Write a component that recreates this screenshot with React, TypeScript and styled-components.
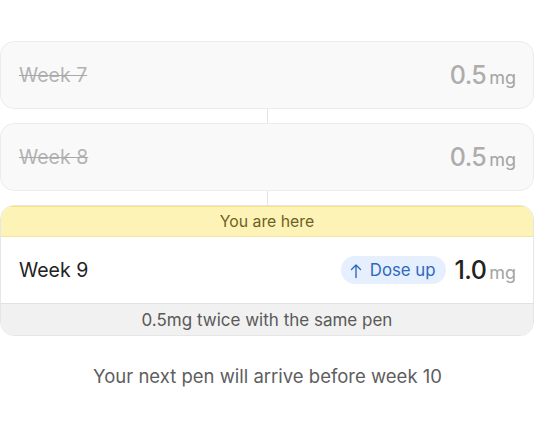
import React, { FC } from 'react';
import styled, { createGlobalStyle, css } from 'styled-components';

const GlobalStyle = createGlobalStyle`
  html, body {
    margin: 0;
    padding: 0;
    background: #ffffff;
  }
  body {
    font-family: Inter, 'Noto Sans', sans-serif;
    -webkit-font-smoothing: antialiased;
  }
`;

interface WeekItem {
  week: number;
  dose: string;
  done?: boolean;
}

const pastWeeks: WeekItem[] = [
  { week: 7, dose: '0.5', done: true },
  { week: 8, dose: '0.5', done: true },
];

const DoseValue: FC<{ dose: string; muted?: boolean }> = ({ dose, muted }) => (
  <Dose $muted={muted}>
    <DoseNumber>{dose}</DoseNumber>
    <DoseUnit>mg</DoseUnit>
  </Dose>
);

export default function App() {
  return (
    <>
      <GlobalStyle />
      <Page>
        <Timeline>
          {pastWeeks.map(item => (
            <React.Fragment key={item.week}>
              <PastCard>
                <WeekLabel $done>Week {item.week}</WeekLabel>
                <DoseValue dose={item.dose} muted />
              </PastCard>
              <Connector />
            </React.Fragment>
          ))}

          <CurrentCard>
            <HereBanner>You are here</HereBanner>
            <CurrentRow>
              <WeekLabel>Week 9</WeekLabel>
              <RightGroup>
                <Badge>
                  <svg width="14" height="16" viewBox="0 0 14 16" fill="none">
                    <path
                      d="M7 14.5V2M2.5 6.5L7 2l4.5 4.5"
                      stroke="currentColor"
                      strokeWidth="1.4"
                      strokeLinecap="round"
                      strokeLinejoin="round"
                    />
                  </svg>
                  Dose up
                </Badge>
                <DoseValue dose="1.0" />
              </RightGroup>
            </CurrentRow>
            <Note>0.5mg twice with the same pen</Note>
          </CurrentCard>
        </Timeline>

        <Footer>Your next pen will arrive before week 10</Footer>
      </Page>
    </>
  );
}

const Page = styled.div`
  width: 535px;
  padding-top: 41px;
  display: flex;
  flex-direction: column;
`;

const Timeline = styled.div`
  display: flex;
  flex-direction: column;
  align-items: stretch;
  width: 534px;
`;

const cardBase = css`
  border-radius: 14px;
  box-sizing: border-box;
  border: 1px solid #ececec;
`;

const PastCard = styled.div`
  ${cardBase};
  height: 68px;
  display: flex;
  align-items: center;
  justify-content: space-between;
  padding: 0 17px 0 18px;
  background: #f9f9f9;
`;

const Connector = styled.div`
  width: 1px;
  height: 14px;
  background: #e4e4e4;
  align-self: center;
`;

const WeekLabel = styled.span<{ $done?: boolean }>`
  font-size: 19.5px;
  font-weight: 400;
  color: ${({ $done }) => ($done ? '#b3b3b3' : '#222222')};
  text-decoration: ${({ $done }) => ($done ? 'line-through' : 'none')};
  text-decoration-color: #a8a8a8;
`;

const Dose = styled.span<{ $muted?: boolean }>`
  display: flex;
  align-items: baseline;
  gap: 3px;
  color: ${({ $muted }) => ($muted ? '#adadad' : '#222222')};
`;

const DoseNumber = styled.span`
  font-size: 25px;
  font-weight: 500;
  letter-spacing: -0.6px;
`;

const DoseUnit = styled.span`
  font-size: 18px;
  font-weight: 400;
  color: #a3a3a3;
`;

const CurrentCard = styled.div`
  ${cardBase};
  border-color: #e6e6e6;
  overflow: hidden;
  display: flex;
  flex-direction: column;
  background: #ffffff;
`;

const HereBanner = styled.div`
  height: 30px;
  display: flex;
  align-items: center;
  justify-content: center;
  background: #fdf3b6;
  border-bottom: 1px solid #f3e6a0;
  box-shadow: inset 0 1px 0 #f9e27a;
  font-size: 15.8px;
  color: #6d6124;
`;

const CurrentRow = styled.div`
  height: 66px;
  display: flex;
  align-items: center;
  justify-content: space-between;
  padding: 0 17px 0 18px;
`;

const RightGroup = styled.div`
  display: flex;
  align-items: center;
  gap: 9px;
`;

const Badge = styled.span`
  display: inline-flex;
  align-items: center;
  gap: 7px;
  height: 28px;
  padding: 0 10px 0 8px;
  border-radius: 14px;
  background: #e6effd;
  color: #2f69bd;
  font-size: 16.8px;
  svg {
    margin-top: 1px;
  }
`;

const Note = styled.div`
  height: 31px;
  display: flex;
  align-items: center;
  justify-content: center;
  background: #f1f1f1;
  border-top: 1px solid #e2e2e2;
  font-size: 17px;
  color: #595959;
`;

const Footer = styled.div`
  margin-top: 28px;
  text-align: center;
  font-size: 18.5px;
  color: #5e5e5e;
  line-height: 24px;
`;
